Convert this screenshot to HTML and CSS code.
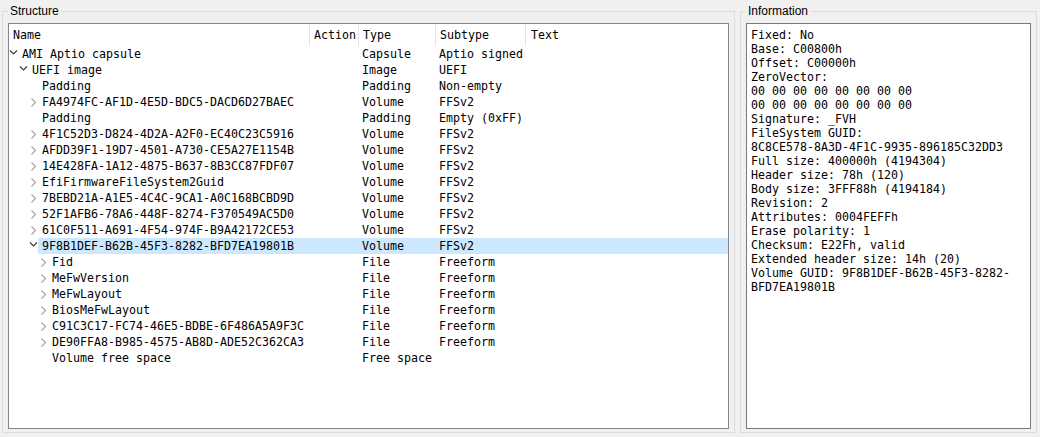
FILE: index.html
```html
<!DOCTYPE html>
<html>
<head>
<meta charset="utf-8">
<title>UEFITool</title>
<link rel="stylesheet" href="styles.css">
</head>
<body>
<div class="window">
  <section class="group group-structure">
    <span class="legend">Structure</span>
    <div class="tree">
      <div class="tree-header">
        <div class="hcell">Name</div>
        <div class="hcell">Action</div>
        <div class="hcell">Type</div>
        <div class="hcell">Subtype</div>
        <div class="hcell last">Text</div>
      </div>
      <div class="rows">
        <div class="row l0"><div class="name"><span class="toggle"><svg width="9" height="16"><polyline class="open" points="1,4.5 4.5,8 8,4.5"/></svg></span><span class="label">AMI Aptio capsule</span></div><div class="cell"></div><div class="cell">Capsule</div><div class="cell">Aptio signed</div><div class="cell"></div></div>
        <div class="row l1"><div class="name"><span class="toggle"><svg width="9" height="16"><polyline class="open" points="1,4.5 4.5,8 8,4.5"/></svg></span><span class="label">UEFI image</span></div><div class="cell"></div><div class="cell">Image</div><div class="cell">UEFI</div><div class="cell"></div></div>
        <div class="row l2"><div class="name"><span class="toggle"></span><span class="label">Padding</span></div><div class="cell"></div><div class="cell">Padding</div><div class="cell">Non-empty</div><div class="cell"></div></div>
        <div class="row l2"><div class="name"><span class="toggle"><svg width="9" height="16"><polyline class="closed" points="2.5,4.5 6.5,8.5 2.5,12.5"/></svg></span><span class="label">FA4974FC-AF1D-4E5D-BDC5-DACD6D27BAEC</span></div><div class="cell"></div><div class="cell">Volume</div><div class="cell">FFSv2</div><div class="cell"></div></div>
        <div class="row l2"><div class="name"><span class="toggle"></span><span class="label">Padding</span></div><div class="cell"></div><div class="cell">Padding</div><div class="cell">Empty (0xFF)</div><div class="cell"></div></div>
        <div class="row l2"><div class="name"><span class="toggle"><svg width="9" height="16"><polyline class="closed" points="2.5,4.5 6.5,8.5 2.5,12.5"/></svg></span><span class="label">4F1C52D3-D824-4D2A-A2F0-EC40C23C5916</span></div><div class="cell"></div><div class="cell">Volume</div><div class="cell">FFSv2</div><div class="cell"></div></div>
        <div class="row l2"><div class="name"><span class="toggle"><svg width="9" height="16"><polyline class="closed" points="2.5,4.5 6.5,8.5 2.5,12.5"/></svg></span><span class="label">AFDD39F1-19D7-4501-A730-CE5A27E1154B</span></div><div class="cell"></div><div class="cell">Volume</div><div class="cell">FFSv2</div><div class="cell"></div></div>
        <div class="row l2"><div class="name"><span class="toggle"><svg width="9" height="16"><polyline class="closed" points="2.5,4.5 6.5,8.5 2.5,12.5"/></svg></span><span class="label">14E428FA-1A12-4875-B637-8B3CC87FDF07</span></div><div class="cell"></div><div class="cell">Volume</div><div class="cell">FFSv2</div><div class="cell"></div></div>
        <div class="row l2"><div class="name"><span class="toggle"><svg width="9" height="16"><polyline class="closed" points="2.5,4.5 6.5,8.5 2.5,12.5"/></svg></span><span class="label">EfiFirmwareFileSystem2Guid</span></div><div class="cell"></div><div class="cell">Volume</div><div class="cell">FFSv2</div><div class="cell"></div></div>
        <div class="row l2"><div class="name"><span class="toggle"><svg width="9" height="16"><polyline class="closed" points="2.5,4.5 6.5,8.5 2.5,12.5"/></svg></span><span class="label">7BEBD21A-A1E5-4C4C-9CA1-A0C168BCBD9D</span></div><div class="cell"></div><div class="cell">Volume</div><div class="cell">FFSv2</div><div class="cell"></div></div>
        <div class="row l2"><div class="name"><span class="toggle"><svg width="9" height="16"><polyline class="closed" points="2.5,4.5 6.5,8.5 2.5,12.5"/></svg></span><span class="label">52F1AFB6-78A6-448F-8274-F370549AC5D0</span></div><div class="cell"></div><div class="cell">Volume</div><div class="cell">FFSv2</div><div class="cell"></div></div>
        <div class="row l2"><div class="name"><span class="toggle"><svg width="9" height="16"><polyline class="closed" points="2.5,4.5 6.5,8.5 2.5,12.5"/></svg></span><span class="label">61C0F511-A691-4F54-974F-B9A42172CE53</span></div><div class="cell"></div><div class="cell">Volume</div><div class="cell">FFSv2</div><div class="cell"></div></div>
        <div class="row l2 selected"><div class="name"><span class="toggle"><svg width="9" height="16"><polyline class="open" points="1,4.5 4.5,8 8,4.5"/></svg></span><span class="label">9F8B1DEF-B62B-45F3-8282-BFD7EA19801B</span></div><div class="cell"></div><div class="cell">Volume</div><div class="cell">FFSv2</div><div class="cell"></div></div>
        <div class="row l3"><div class="name"><span class="toggle"><svg width="9" height="16"><polyline class="closed" points="2.5,4.5 6.5,8.5 2.5,12.5"/></svg></span><span class="label">Fid</span></div><div class="cell"></div><div class="cell">File</div><div class="cell">Freeform</div><div class="cell"></div></div>
        <div class="row l3"><div class="name"><span class="toggle"><svg width="9" height="16"><polyline class="closed" points="2.5,4.5 6.5,8.5 2.5,12.5"/></svg></span><span class="label">MeFwVersion</span></div><div class="cell"></div><div class="cell">File</div><div class="cell">Freeform</div><div class="cell"></div></div>
        <div class="row l3"><div class="name"><span class="toggle"><svg width="9" height="16"><polyline class="closed" points="2.5,4.5 6.5,8.5 2.5,12.5"/></svg></span><span class="label">MeFwLayout</span></div><div class="cell"></div><div class="cell">File</div><div class="cell">Freeform</div><div class="cell"></div></div>
        <div class="row l3"><div class="name"><span class="toggle"><svg width="9" height="16"><polyline class="closed" points="2.5,4.5 6.5,8.5 2.5,12.5"/></svg></span><span class="label">BiosMeFwLayout</span></div><div class="cell"></div><div class="cell">File</div><div class="cell">Freeform</div><div class="cell"></div></div>
        <div class="row l3"><div class="name"><span class="toggle"><svg width="9" height="16"><polyline class="closed" points="2.5,4.5 6.5,8.5 2.5,12.5"/></svg></span><span class="label">C91C3C17-FC74-46E5-BDBE-6F486A5A9F3C</span></div><div class="cell"></div><div class="cell">File</div><div class="cell">Freeform</div><div class="cell"></div></div>
        <div class="row l3"><div class="name"><span class="toggle"><svg width="9" height="16"><polyline class="closed" points="2.5,4.5 6.5,8.5 2.5,12.5"/></svg></span><span class="label">DE90FFA8-B985-4575-AB8D-ADE52C362CA3</span></div><div class="cell"></div><div class="cell">File</div><div class="cell">Freeform</div><div class="cell"></div></div>
        <div class="row l3"><div class="name"><span class="toggle"></span><span class="label">Volume free space</span></div><div class="cell"></div><div class="cell">Free space</div><div class="cell"></div><div class="cell"></div></div>
      </div>
    </div>
  </section>
  <section class="group group-info">
    <span class="legend">Information</span>
    <div class="info">Fixed: No
Base: C00800h
Offset: C00000h
ZeroVector:
00 00 00 00 00 00 00 00
00 00 00 00 00 00 00 00
Signature: _FVH
FileSystem GUID:
8C8CE578-8A3D-4F1C-9935-896185C32DD3
Full size: 400000h (4194304)
Header size: 78h (120)
Body size: 3FFF88h (4194184)
Revision: 2
Attributes: 0004FEFFh
Erase polarity: 1
Checksum: E22Fh, valid
Extended header size: 14h (20)
Volume GUID: 9F8B1DEF-B62B-45F3-8282-
BFD7EA19801B</div>
  </section>
</div>
</body>
</html>
```
FILE: styles.css
```css
* { box-sizing: border-box; }
html, body { margin: 0; padding: 0; }
body {
  background: #f0f0f0;
  width: 1040px;
  height: 437px;
  overflow: hidden;
  font-family: "DejaVu Sans Mono", "Liberation Mono", monospace;
  font-size: 11.63px;
  color: #000;
}
.window {
  display: flex;
  gap: 5px;
  padding: 11px 3px 0 2px;
  height: 437px;
}
.group {
  position: relative;
  height: 422px;
  border: 1px solid #dcdcdc;
  padding: 11px 5px 3px 5px;
  display: flex;
}
.group-structure { width: 733px; }
.group-info { width: 297px; }
.legend {
  position: absolute;
  top: -8px;
  left: 5px;
  padding: 0 2px;
  background: #f0f0f0;
  font-family: "Liberation Sans", Arial, sans-serif;
  font-size: 12px;
  line-height: 14px;
  color: #000;
}
.tree {
  flex: 1;
  background: #fff;
  border: 1px solid #828790;
  overflow: hidden;
}
.tree-header {
  display: grid;
  grid-template-columns: 301px 49px 77px 90px 1fr;
  height: 22px;
}
.hcell {
  border-right: 1px solid #e5e5e5;
  padding-left: 4px;
  line-height: 22px;
  white-space: nowrap;
}
.hcell.last { border-right: 0; padding-left: 5px; }
.row {
  display: grid;
  grid-template-columns: 301px 49px 77px 90px 1fr;
  height: 16px;
  line-height: 16px;
  white-space: nowrap;
}
.name { display: flex; }
.l1 .name { padding-left: 10px; }
.l2 .name { padding-left: 20px; }
.l3 .name { padding-left: 30px; }
.toggle {
  width: 9px;
  height: 16px;
  flex: none;
}
.toggle svg { display: block; }
.toggle polyline { fill: none; stroke-width: 1.2; }
.toggle .open { stroke: #3c3c3c; }
.toggle .closed { stroke: #a6a6a6; }
.label { flex: 1; padding-left: 4px; }
.cell { padding-left: 3px; }
.selected .label, .selected .cell { background: #cce8ff; }
.info {
  flex: 1;
  background: #fff;
  border: 1px solid #7a7a7a;
  padding: 4px 4px;
  white-space: pre;
  line-height: 14px;
  overflow: hidden;
}
```
